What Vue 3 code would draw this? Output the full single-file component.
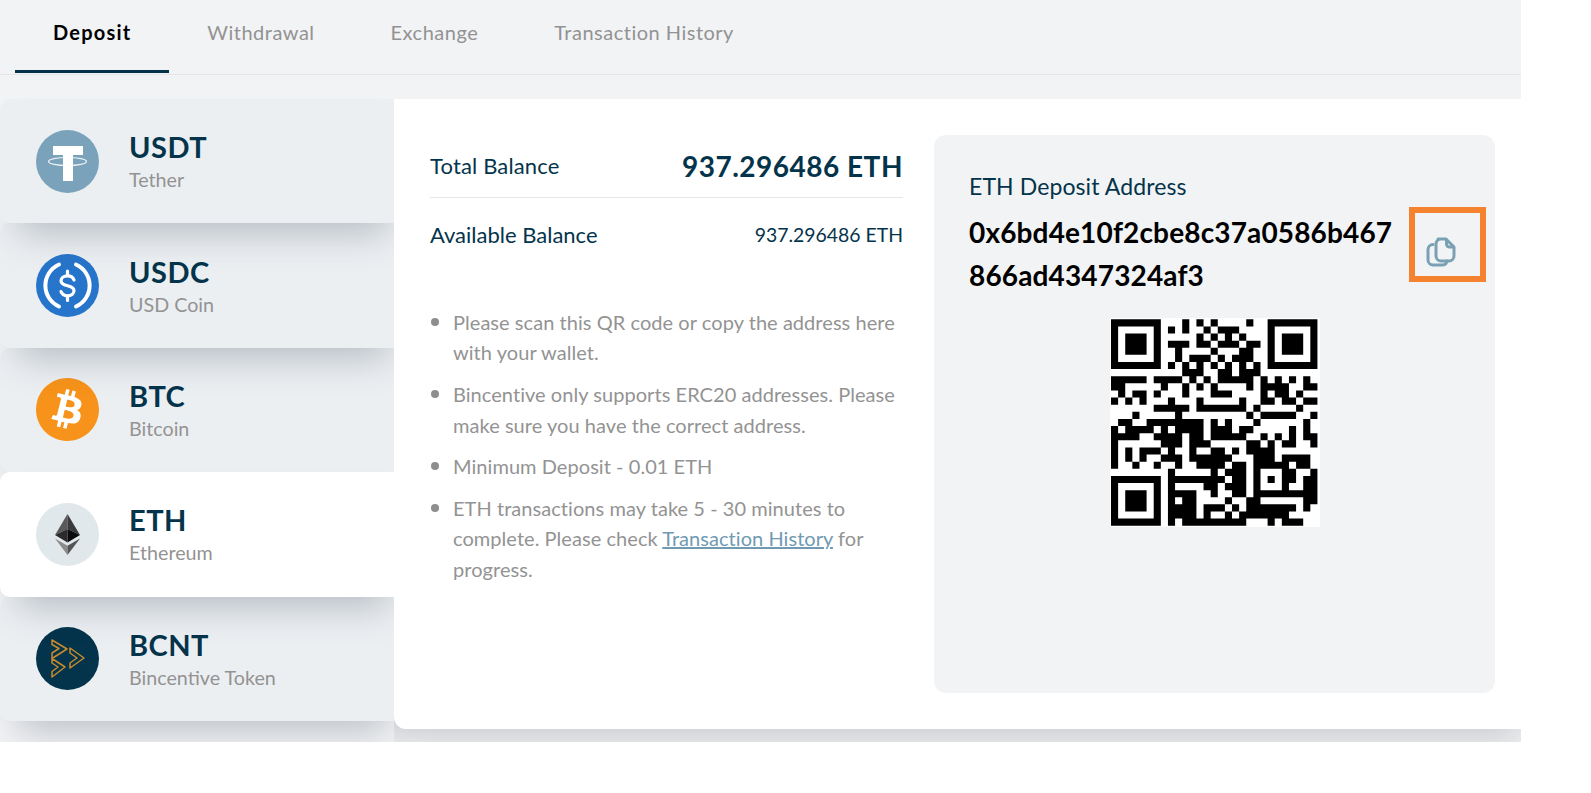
<template>
  <div class="page">
    <header class="tabs">
      <a
        v-for="tab in tabs"
        :key="tab"
        class="tab"
        :class="{ active: tab === 'Deposit' }"
      >{{ tab }}</a>
    </header>

    <div class="content">
      <aside class="coins">
        <div
          v-for="(coin, i) in coins"
          :key="coin.symbol"
          class="coin"
          :class="{ active: coin.symbol === 'ETH' }"
          :style="{ zIndex: coin.symbol === 'ETH' ? 9 : 5 - i }"
        >
          <svg class="coin-icon" viewBox="0 0 63 63">
            <template v-if="coin.symbol === 'USDT'">
              <circle cx="31.5" cy="31.5" r="31.5" fill="#7aa3bb" />
              <path d="M17 16h30v9H37v26H27V25H17z" fill="#fff" />
              <ellipse cx="31.5" cy="31.5" rx="19" ry="4" fill="none" stroke="#fff" stroke-width="1.2" opacity=".85" />
            </template>
            <template v-else-if="coin.symbol === 'USDC'">
              <circle cx="31.5" cy="31.5" r="31.5" fill="#2775ca" />
              <g fill="none" stroke="#fff" stroke-linecap="round">
                <path d="M23 10.5a23 23 0 0 0 0 42M40 10.5a23 23 0 0 1 0 42" stroke-width="4" />
                <path d="M38 26c-1-3-3.8-4.2-6.5-4.2-3.6 0-6.5 2-6.5 5 0 3.2 3 4.2 6.5 5 3.5.8 6.5 1.8 6.5 5 0 3-2.9 5-6.5 5-2.900 0-5.500-1.300-6.500-4.200" stroke-width="3.2" />
                <path d="M31.5 17v4.500M31.5 42v4.500" stroke-width="3.2" />
              </g>
            </template>
            <template v-else-if="coin.symbol === 'BTC'">
              <circle cx="31.5" cy="31.5" r="28" fill="#fff" />
              <path
                transform="scale(2.625)"
                fill="#f7931a"
                d="M23.638 14.904c-1.602 6.43-8.113 10.34-14.542 8.736C2.67 22.05-1.244 15.525.362 9.105 1.962 2.67 8.475-1.243 14.9.358c6.43 1.605 10.342 8.115 8.738 14.548v-.002zm-6.35-4.613c.24-1.59-.974-2.45-2.64-3.03l.54-2.153-1.315-.33-.525 2.107c-.345-.087-.705-.167-1.064-.25l.526-2.127-1.32-.33-.54 2.165c-.285-.067-.565-.132-.84-.2l-1.815-.45-.35 1.407s.975.225.955.236c.535.136.63.486.615.766l-1.477 5.92c-.075.166-.24.406-.614.314.015.02-.96-.24-.96-.24l-.66 1.51 1.71.426.93.242-.54 2.19 1.32.327.54-2.17c.36.1.705.19 1.05.273l-.51 2.154 1.32.33.545-2.19c2.24.427 3.93.257 4.64-1.774.57-1.637-.03-2.58-1.217-3.196.854-.193 1.5-.76 1.68-1.93h.01zm-3.01 4.22c-.404 1.64-3.157.75-4.05.53l.72-2.9c.896.23 3.757.67 3.33 2.37zm.41-4.24c-.37 1.49-2.662.735-3.405.55l.654-2.64c.744.18 3.137.524 2.75 2.084v.006z"
              />
            </template>
            <template v-else-if="coin.symbol === 'ETH'">
              <circle cx="31.5" cy="31.5" r="31.5" fill="#e1e8eb" />
              <path d="M31.5 11 19 32l12.500-6z" fill="#5a5a5a" />
              <path d="M31.5 11 44 32l-12.500-6z" fill="#3a3a3a" />
              <path d="M19 32l12.500-6v13.500z" fill="#2b2b2b" />
              <path d="M44 32l-12.500-6v13.500z" fill="#0c0c0c" />
              <path d="M19 35.500l12.500 7.300V52z" fill="#8c8c8c" />
              <path d="M44 35.500l-12.500 7.300V52z" fill="#555" />
            </template>
            <template v-else>
              <circle cx="31.5" cy="31.5" r="31.5" fill="#04344b" />
              <g fill="none" stroke="#c98a2b" stroke-width="1.5" stroke-linejoin="round">
                <path d="M16 13l15 9-15 9.500 13 8.500-13 10v-5.500l6-4.500-6-4v-10l7-4.500-7-4z" />
                <path d="M34 21l14 10-14 10v-5l7-5-7-5z" />
              </g>
            </template>
          </svg>
          <div class="coin-text">
            <div class="coin-symbol">{{ coin.symbol }}</div>
            <div class="coin-name">{{ coin.name }}</div>
          </div>
        </div>
      </aside>

      <main class="panel">
        <section class="info">
          <div class="balance total">
            <span>Total Balance</span>
            <strong>937.296486 ETH</strong>
          </div>
          <div class="balance available">
            <span>Available Balance</span>
            <span class="amount">937.296486 ETH</span>
          </div>
          <ul class="notes">
            <li>Please scan this QR code or copy the address here with your wallet.</li>
            <li>Bincentive only supports ERC20 addresses. Please make sure you have the correct address.</li>
            <li>Minimum Deposit - 0.01 ETH</li>
            <li>ETH transactions may take 5 - 30 minutes to complete. Please check <a class="link">Transaction History</a> for progress.</li>
          </ul>
        </section>

        <section class="address-box">
          <div class="address-label">ETH Deposit Address</div>
          <div class="address">0x6bd4e10f2cbe8c37a0586b467<br />866ad4347324af3</div>
          <button class="copy">
            <svg width="30" height="30" viewBox="0 0 30 30" fill="none" stroke="#7aa0b3" stroke-width="3" stroke-linejoin="round" stroke-linecap="round">
              <path d="M12 2h8l8 8v9a5 5 0 0 1-5 5h-8a5 5 0 0 1-5-5V7a5 5 0 0 1 5-5z" />
              <path d="M20.5 3v4a3 3 0 0 0 3 3h4" />
              <path d="M7 7.500a5 5 0 0 0-5 5V23a5 5 0 0 0 5 5h9a5 5 0 0 0 5-4" />
            </svg>
          </button>
          <svg class="qr" viewBox="-0.14 -0.18 29.5 29.36">
            <path :d="qrPath" />
          </svg>
        </section>
      </main>
    </div>
  </div>
</template>

<script setup>
const tabs = ['Deposit', 'Withdrawal', 'Exchange', 'Transaction History']

const coins = [
  { symbol: 'USDT', name: 'Tether' },
  { symbol: 'USDC', name: 'USD Coin' },
  { symbol: 'BTC', name: 'Bitcoin' },
  { symbol: 'ETH', name: 'Ethereum' },
  { symbol: 'BCNT', name: 'Bincentive Token' }
]

// black modules per row, "a-b" is a run of columns
const qr = [
  '0-6 10 12 14 19 22-28',
  '0 6 8 10 13 15-17 22 28',
  '0 2-4 6 12 14 16 18 22 24-26 28',
  '0 2-4 6 8-10 12-13 15-17 19-20 22 24-26 28',
  '0 2-4 6 9 14 18-19 22 24-26 28',
  '0 6 9 11-13 15 17-19 22 28',
  '0-6 8 10 12 14 16 18 20 22-28',
  '10-12 15-16 18-20',
  '0-4 6-9 11 13 15-19 21 23 25 27',
  '0-1 7 10 12 14 19 21-24 27-28',
  '1 3-4 6 10 14-16 21 23-24 26',
  '0 2 4 8 12 18 21-22 24-25 27-28',
  '6-10 12-18 20 26',
  '3 9 19 21-25 28',
  '1-2 5-12 14 16 20 27',
  '0 2-5 7 9-12 14-16 18-19 25 27',
  '0-3 6-9 11-12 14-18 21 23 25 27-28',
  '0 7-9 11-13 19-20 22 24-25 28',
  '0 2 4-6 8 11 14-15 17 19-22',
  '0 2 4 7-9 11-16 20-22 24-27',
  '0 3 6 9 12-15 17-18 20-24 26-27',
  '8 14 16-18 20 24-25 28',
  '0-6 8-15 17-18 20 22 24-25 27-28',
  '0 6 8 13-14 16-18 20 24 27-28',
  '0 2-4 6 8-11 14 17-18 20-28',
  '0 2-4 6 8 10-11 16 19-20 27-28',
  '0 2-4 6 8-11 13-15 17 19-25 27',
  '0 6 8-11 13 16 18-24',
  '0-6 8 10-18 22 24-26'
]

const qrPath = qr
  .map((row, y) =>
    row
      .split(' ')
      .map(part => {
        const [from, to] = part.split('-').map(Number)
        const w = (to === undefined ? from : to) - from + 1
        return `M${from} ${y}h${w}v1h-${w}z`
      })
      .join('')
  )
  .join('')
</script>

<style>
body {
  background: #fff;
}
</style>

<style scoped>
.page {
  width: 1521px;
  height: 742px;
  background: #f2f3f5;
  overflow: hidden;
  font-family: Lato, "Open Sans", sans-serif;
}

.tabs {
  display: flex;
  height: 74px;
  padding-left: 15px;
  border-bottom: 1px solid #e3e5e7;
}

.tab {
  display: flex;
  align-items: center;
  height: 73px;
  padding: 0 38px 6px;
  box-sizing: border-box;
  border-bottom: 3px solid transparent;
  font-size: 20px;
  letter-spacing: 0.5px;
  color: #929292;
}

.tab.active {
  border-bottom-color: #04344b;
  color: #000;
  font-weight: 700;
  letter-spacing: 1.2px;
}

.content {
  display: flex;
  padding-top: 24px;
}

.coins {
  width: 394px;
  flex: none;
}

.coin {
  position: relative;
  display: flex;
  align-items: center;
  gap: 30px;
  height: 124.4px;
  padding-left: 36px;
  box-sizing: border-box;
  background: #eceff2;
  border-radius: 10px 0 0 10px;
  box-shadow: 6px 22px 36px -12px rgba(30, 45, 60, 0.26);
}

.coin.active {
  background: #fff;
}

.coin-icon {
  width: 63px;
  height: 63px;
  flex: none;
}

.coin-text {
  padding-top: 1px;
}

.coin-symbol {
  margin-bottom: 3px;
  font-size: 29px;
  font-weight: 700;
  line-height: 34px;
  letter-spacing: 0.5px;
  color: #04344b;
}

.coin-name {
  font-size: 19.7px;
  line-height: 26px;
  color: #939393;
}

.panel {
  position: relative;
  z-index: 10;
  flex: 1;
  display: flex;
  gap: 31px;
  height: 630px;
  padding: 36px 26px 36px 36px;
  box-sizing: border-box;
  background: #fff;
  border-radius: 0 0 0 12px;
  box-shadow: 0 14px 30px rgba(30, 40, 50, 0.16);
  clip-path: inset(0 -40px -40px 0);
}

.info {
  width: 473px;
  flex: none;
}

.balance {
  display: flex;
  justify-content: space-between;
  align-items: center;
  color: #04344b;
  font-size: 22px;
}

.total {
  height: 62px;
  border-bottom: 1px solid #e5e7e9;
  letter-spacing: 0.15px;
}

.total span {
  margin-top: -2px;
}

.total strong {
  font-size: 28px;
  font-weight: 700;
  letter-spacing: 0.5px;
}

.available {
  height: 72px;
}

.amount {
  font-size: 19.4px;
}

.notes {
  list-style: none;
  margin: 37px 0 0;
  padding: 0;
  color: #939393;
  font-size: 20px;
  line-height: 30.4px;
  letter-spacing: 0.05px;
}

.notes li {
  position: relative;
  padding-left: 23px;
  margin-bottom: 11.3px;
}

.notes li::before {
  content: "";
  position: absolute;
  left: 1px;
  top: 11px;
  width: 8px;
  height: 8px;
  border-radius: 50%;
  background: #8e8e8e;
}

.link {
  color: #6f9ab2;
  text-decoration: underline;
}

.address-box {
  position: relative;
  flex: 1;
  padding: 36px 35px 0;
  box-sizing: border-box;
  background: #f2f3f5;
  border-radius: 12px;
}

.address-label {
  font-size: 23px;
  line-height: 30px;
  letter-spacing: 0.1px;
  color: #04344b;
}

.address {
  margin-top: 10px;
  font-size: 28px;
  font-weight: 700;
  line-height: 42.6px;
  letter-spacing: 0.15px;
  color: #000;
}

.copy {
  position: absolute;
  top: 72px;
  right: 9px;
  display: flex;
  align-items: flex-start;
  width: 77px;
  height: 75px;
  padding: 24px 0 0 11px;
  box-sizing: border-box;
  background: none;
  border: 6px solid #f5822f;
}

.copy svg {
  display: block;
}

.qr {
  display: block;
  width: 210px;
  height: 209px;
  margin: 22px auto 0;
  background: #fff;
}
</style>
